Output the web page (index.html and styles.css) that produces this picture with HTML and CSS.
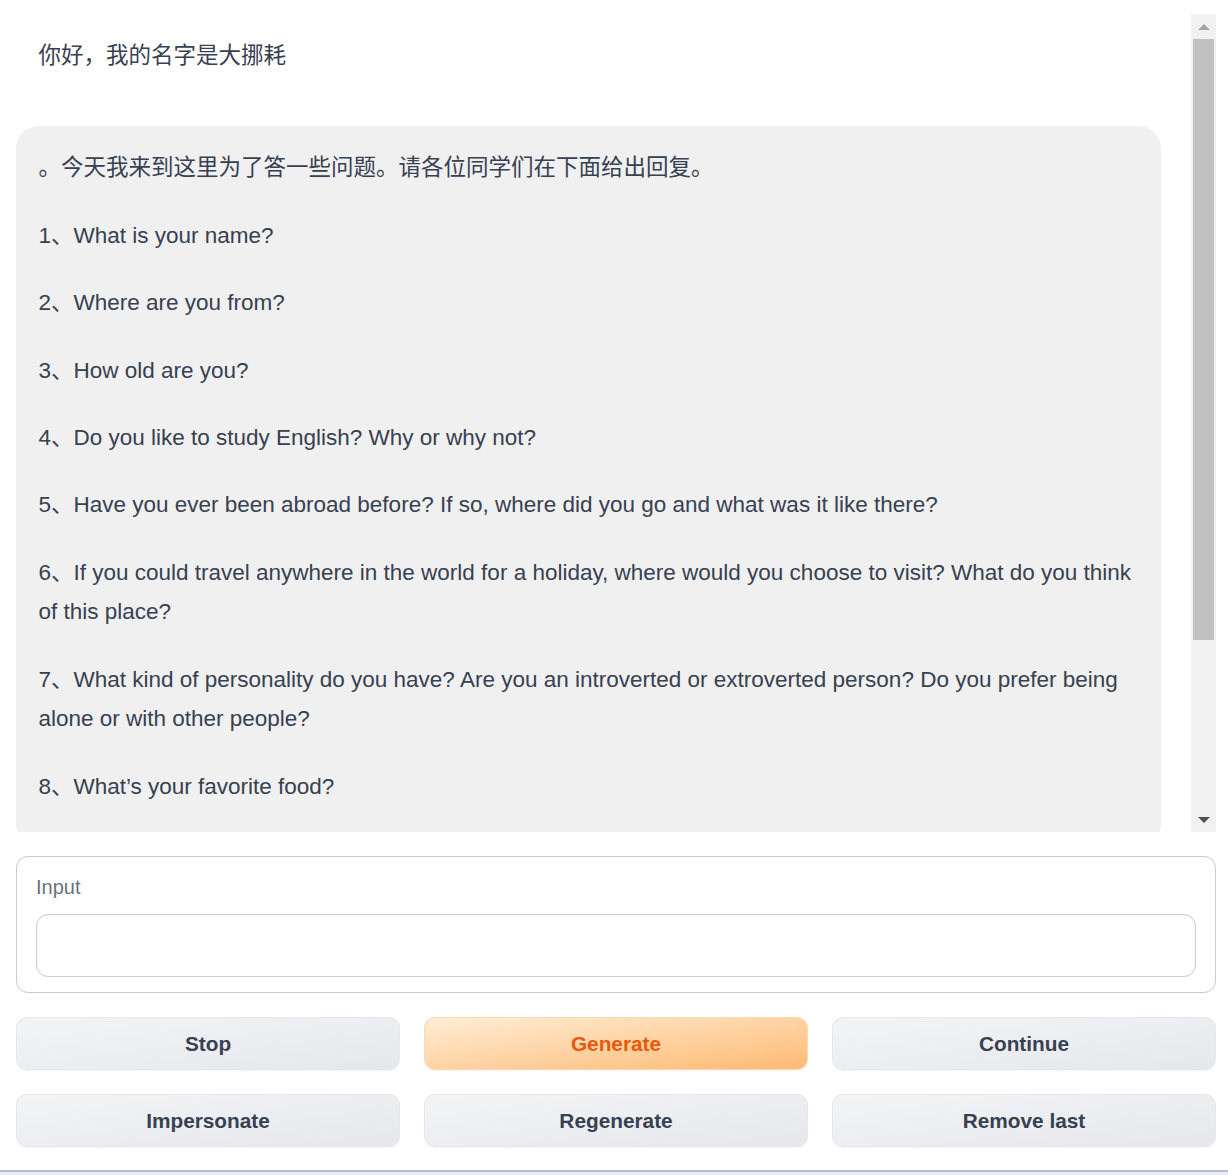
FILE: index.html
```html
<!DOCTYPE html>
<html lang="zh">
<head>
<meta charset="utf-8">
<title>Chat</title>
<link rel="stylesheet" href="styles.css">
</head>
<body>
<div class="page">
  <div class="chat">
    <div class="chat-scroll">
      <div class="msg user">
        <p>你好，我的名字是大挪耗</p>
      </div>
      <div class="msg bot">
        <p>。今天我来到这里为了答一些问题。请各位同学们在下面给出回复。</p>
        <p>1、What is your name?</p>
        <p>2、Where are you from?</p>
        <p>3、How old are you?</p>
        <p>4、Do you like to study English? Why or why not?</p>
        <p>5、Have you ever been abroad before? If so, where did you go and what was it like there?</p>
        <p>6、If you could travel anywhere in the world for a holiday, where would you choose to visit? What do you think of this place?</p>
        <p>7、What kind of personality do you have? Are you an introverted or extroverted person? Do you prefer being alone or with other people?</p>
        <p>8、What’s your favorite food?</p>
      </div>
    </div>
    <div class="scrollbar">
      <div class="sb-btn"><span class="tri-up"></span></div>
      <div class="sb-track"><div class="sb-thumb"></div></div>
      <div class="sb-btn"><span class="tri-down"></span></div>
    </div>
  </div>

  <div class="input-block">
    <label class="input-label" for="msg">Input</label>
    <textarea id="msg" class="input-area"></textarea>
  </div>

  <div class="buttons">
    <button class="btn">Stop</button>
    <button class="btn primary">Generate</button>
    <button class="btn">Continue</button>
    <button class="btn">Impersonate</button>
    <button class="btn">Regenerate</button>
    <button class="btn">Remove last</button>
  </div>
</div>
<div class="footer-line"></div>
</body>
</html>
```

FILE: styles.css
```css
* { box-sizing: border-box; }

html, body {
  margin: 0;
  padding: 0;
  background: #ffffff;
  font-family: "Liberation Sans", Arial, "Noto Sans CJK SC", sans-serif;
  color: #374151;
}

body {
  height: 1175px;
  overflow: hidden;
  display: flex;
  flex-direction: column;
}

.page {
  padding: 14px 12px 0 16px;
  flex: 1;
}

.chat {
  height: 818px;
  display: flex;
}

.chat-scroll {
  flex: 1;
  overflow: hidden;
  padding-right: 30px;
}

.msg {
  padding: 22.4px 22.4px;
  font-size: 22.5px;
  line-height: 1.75;
  border-radius: 22px;
}

.msg p {
  margin: 0 0 28.1px 0;
}

.msg p:last-child { margin-bottom: 0; }

.msg.user {
  background: #ffffff;
  margin-bottom: 27.6px;
}

.msg.bot {
  background: #f0f0f0;
  padding-bottom: 40px;
}

.scrollbar {
  width: 25px;
  background: #f1f1f1;
  display: flex;
  flex-direction: column;
}

.sb-btn {
  height: 25px;
  display: flex;
  align-items: center;
  justify-content: center;
}

.tri-up, .tri-down {
  width: 0;
  height: 0;
  border-left: 6px solid transparent;
  border-right: 6px solid transparent;
}

.tri-up { border-bottom: 6px solid #a3a3a3; }
.tri-down { border-top: 6px solid #505050; }

.sb-track {
  flex: 1;
  padding: 0 2px;
}

.sb-thumb {
  height: 601px;
  background: #c1c1c1;
}

.input-block {
  margin-top: 24px;
  border: 1px solid #cac8da;
  border-radius: 12px;
  padding: 19px 19px 15px 19px;
  height: 137px;
  display: flex;
  flex-direction: column;
}

.input-label {
  font-size: 20px;
  line-height: 22px;
  color: #6b7280;
  margin-bottom: 16px;
}

.input-area {
  display: block;
  width: 100%;
  height: 63px;
  border: 1px solid #cdcbdd;
  border-radius: 12px;
  box-shadow: inset 0 1px 3px rgba(0, 0, 0, 0.06);
  resize: none;
  font-family: inherit;
  font-size: 20px;
  padding: 10px 14px;
  outline: none;
  background: #ffffff;
}

.buttons {
  margin-top: 24px;
  display: grid;
  grid-template-columns: 1fr 1fr 1fr;
  column-gap: 24px;
  row-gap: 24px;
}

.btn {
  height: 53px;
  border: 1px solid #e5e7eb;
  border-radius: 11px;
  background: linear-gradient(to bottom right, #f3f4f6, #e5e7eb);
  box-shadow: 0 1px 2px rgba(0, 0, 0, 0.05);
  font-family: "Liberation Sans", Arial, sans-serif;
  font-weight: bold;
  font-size: 20.8px;
  color: #374151;
  padding: 0;
}

.btn.primary {
  border-color: #fed7aa;
  background: linear-gradient(to bottom right, #ffedd5, #fdba74);
  color: #ea580c;
}

.footer-line {
  height: 5px;
  border-top: 2px solid #b9bdcb;
  background: #e6edf9;
  flex: none;
}
```
